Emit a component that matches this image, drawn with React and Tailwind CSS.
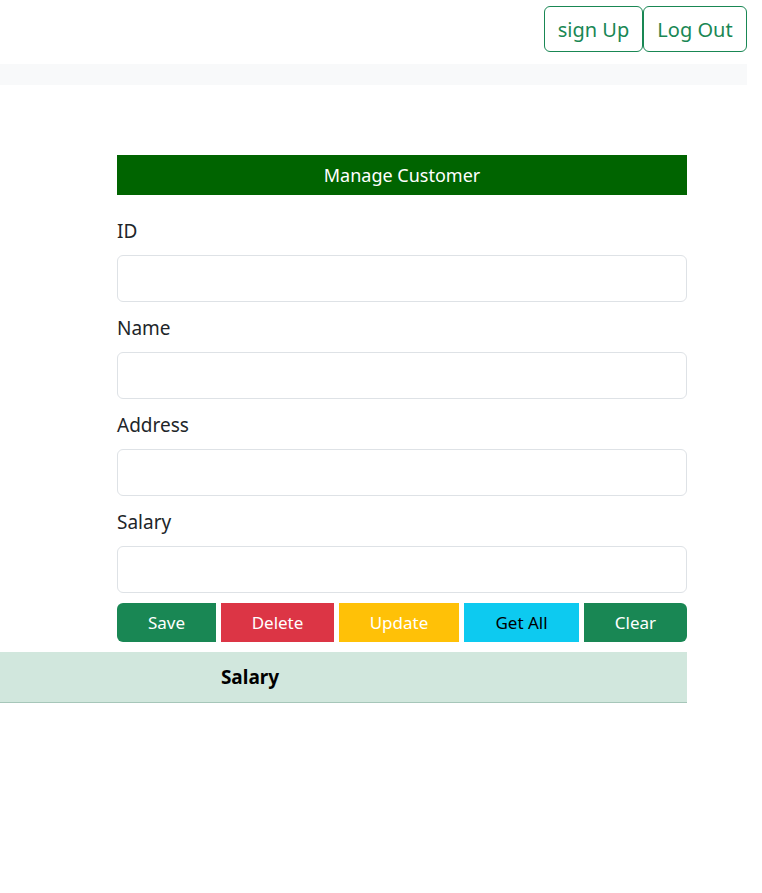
import React from 'react';

const FIELDS = ['ID', 'Name', 'Address', 'Salary'];

const BUTTONS = [
  { label: 'Save', cls: 'w-[99px] bg-[#198754] text-white rounded-l-md' },
  { label: 'Delete', cls: 'w-[113px] bg-[#dc3545] text-white' },
  { label: 'Update', cls: 'w-[120px] bg-[#ffc107] text-white' },
  { label: 'Get All', cls: 'w-[115px] bg-[#0dcaf0] text-black' },
  { label: 'Clear', cls: 'w-[103px] bg-[#198754] text-white rounded-r-md' },
];

const App = () => {
  return (
    <div className="min-h-[893px] w-[762px] bg-white font-['Noto_Sans',sans-serif] text-[#212529]">
      <div className="w-[747px]">
        <div className="flex justify-end pt-[6px]">
          <button className="h-[46px] w-[99px] pt-[2px] border border-[#198754] text-[#198754] text-[20px] rounded-md">
            sign Up
          </button>
          <button className="h-[46px] w-[104px] pt-[2px] border border-[#198754] text-[#198754] text-[20px] rounded-md">
            Log Out
          </button>
        </div>
        <div className="mt-[12px] h-[21px] bg-[#f8f9fa]" />
      </div>

      <div className="ml-[117px] mt-[70px] w-[570px]">
        <div className="h-[40px] bg-[#006400] text-white text-[18px] flex items-center justify-center">
          Manage Customer
        </div>
        <div className="pt-[21px]">
          {FIELDS.map((f, i) => (
            <div key={f} className={i > 0 ? 'mt-[11px]' : ''}>
              <label className="block text-[19px] leading-[30px] mb-[9px]">{f}</label>
              <input className="block w-full h-[47px] border border-[#dee2e6] rounded-md px-3 outline-none" />
            </div>
          ))}
        </div>
        <div className="flex gap-[5px] mt-[10px]">
          {BUTTONS.map((b) => (
            <button key={b.label} className={`h-[39px] text-[17px] ${b.cls}`}>
              {b.label}
            </button>
          ))}
        </div>
      </div>

      <div className="mt-[10px] w-[687px] h-[51px] bg-[#d1e7dd] border-b border-[#a6c6b9] flex items-center">
        <div className="w-[500px] text-center font-bold text-[19px] text-black">Salary</div>
      </div>
    </div>
  );
};

export default App;
